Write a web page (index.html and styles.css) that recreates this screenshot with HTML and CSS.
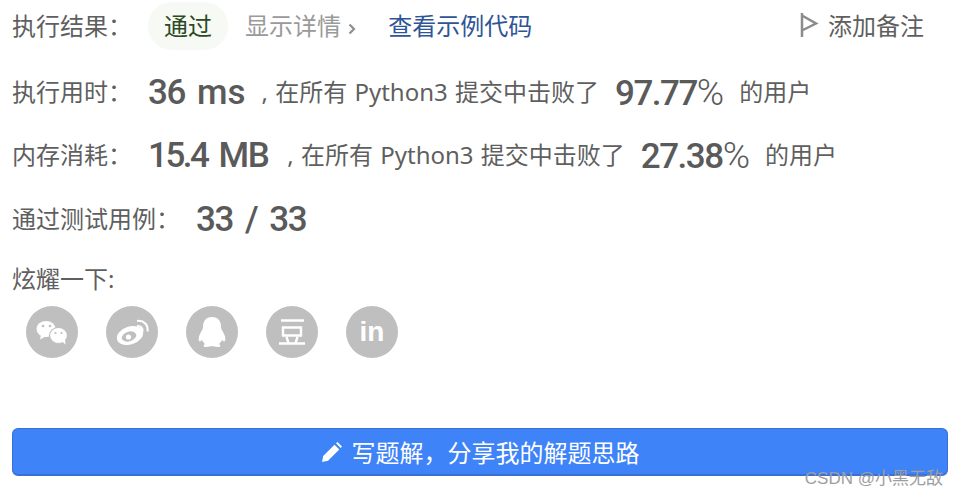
FILE: index.html
```html
<!DOCTYPE html>
<html lang="zh-CN">
<head>
    <meta charset="UTF-8">
    <meta name="viewport" content="width=device-width, initial-scale=1.0">
    <title>提交结果</title>
    <link rel="stylesheet" href="styles.css">
</head>
<body>
    <div class="result">
        <div class="row row-status">
            <span class="label">执行结果：</span>
            <span class="pill">通过</span>
            <span class="details">显示详情
                <svg class="chevron" width="8" height="12" viewBox="0 0 8 12"><path d="M1.500 1.500 6 6l-4.500 4.500" fill="none" stroke="#8f8f8f" stroke-width="2.200"/></svg>
            </span>
            <span class="sample">查看示例代码</span>
            <span class="note">
                <svg class="flag" width="19" height="24" viewBox="0 0 19 24"><path d="M2 0v24M2 2.500l14 8-14 7" fill="none" stroke="#8c8c8c" stroke-width="2.500"/></svg>
                添加备注
            </span>
        </div>

        <div class="row row-time">
            <span class="label">执行用时：</span>
            <span class="big big-time">36 <b class="unit">ms</b></span>
            <span class="text">, 在所有 Python3 提交中击败了</span>
            <span class="big big-percent">97.77<b class="percent">%</b></span>
            <span class="text">的用户</span>
        </div>

        <div class="row row-memory">
            <span class="label">内存消耗：</span>
            <span class="big big-time big-memory">15.4 <b class="unit">MB</b></span>
            <span class="text">, 在所有 Python3 提交中击败了</span>
            <span class="big big-percent">27.38<b class="percent">%</b></span>
            <span class="text">的用户</span>
        </div>

        <div class="row row-cases">
            <span class="label label-cases">通过测试用例：</span>
            <span class="big">33 / 33</span>
        </div>

        <div class="share-title">炫耀一下:</div>
        <div class="share">
            <a class="circle">
                <svg width="52" height="52" viewBox="0 0 52 52" fill="#fff">
                    <ellipse cx="20" cy="23" rx="9.500" ry="8"/>
                    <path d="M15 29l-1 4.500 5.500-3z"/>
                    <ellipse cx="32.500" cy="29.500" rx="9" ry="8" stroke="#bfbfbf" stroke-width="1.200"/>
                    <path d="M36 35.500l3.500 3-.5-5z"/>
                    <g fill="#bfbfbf">
                        <circle cx="17" cy="20" r="1.300"/>
                        <circle cx="24" cy="20" r="1.300"/>
                        <circle cx="29.500" cy="27" r="1.100"/>
                        <circle cx="35.500" cy="27" r="1.100"/>
                    </g>
                </svg>
            </a>
            <a class="circle">
                <svg width="52" height="52" viewBox="0 0 52 52" fill="#fff">
                    <ellipse cx="24" cy="29.500" rx="13.500" ry="9" transform="rotate(-18 24 29.500)"/>
                    <ellipse cx="23" cy="30.500" rx="7.500" ry="4.800" transform="rotate(-18 23 30.500)" fill="#bfbfbf"/>
                    <circle cx="22.500" cy="31" r="2.600"/>
                    <path d="M31 20c3.500-.5 6 2 5.500 5.500M31 15c7-1 11.500 4 10.500 10.500" fill="none" stroke="#fff" stroke-width="2"/>
                </svg>
            </a>
            <a class="circle">
                <svg width="52" height="52" viewBox="0 0 52 52" fill="#fff">
                    <path d="M26 11c-6 0-9 4-9 10 0 2-1 3-2 5-2 3-3 7-2 9 1 1 2 0 3-1 1 2 2 3 3 4-2 1-2 3 1 3 3 0 5-1 6-1s3 1 6 1c3 0 3-2 1-3 1-1 2-2 3-4 1 1 2 2 3 1 1-2 0-6-2-9-1-2-2-3-2-5 0-6-3-10-9-10z"/>
                </svg>
            </a>
            <a class="circle">
                <svg width="52" height="52" viewBox="0 0 52 52" fill="none" stroke="#fff" stroke-width="2.400">
                    <path d="M15 14.500h23M17 21.500h18v8H17zM20.500 31l2 6M31.500 31l-2 6M13 37.500h26"/>
                </svg>
            </a>
            <a class="circle circle-in">in</a>
        </div>

        <button class="write">
            <svg width="22" height="22" viewBox="0 0 22 22" fill="#fff"><path d="M1 21l1.200-6L13.500 3.700l4.800 4.800L7 19.800zM15 2.200l1.500-1.200 4.500 4.500-1.300 1.500z"/></svg>
            写题解，分享我的解题思路
        </button>
    </div>
    <span class="mark">CSDN @小黑无敌</span>
</body>
</html>
```

FILE: styles.css
```css
* {
    box-sizing: border-box;
}
body {
    margin: 0;
    background: #fff;
    color: #5f5f5f;
    font-family: "Noto Sans", "Noto Sans CJK SC", sans-serif;
    font-size: 24px;
}
.result {
    padding: 2px 10px 0 12px;
}
.row {
    display: flex;
    align-items: center;
    white-space: nowrap;
    height: 48px;
}
.label {
    width: 136px;
    margin-bottom: 3px;
}
.label-cases {
    width: 184px;
}
.pill {
    width: 80px;
    height: 48px;
    line-height: 48px;
    text-align: center;
    border-radius: 24px;
    background: #f6f9f4;
    color: #2c4a1f;
}
.details {
    margin: 0 0 3px 17px;
    color: #9a9a9a;
}
.chevron {
    margin-left: 1px;
}
.sample {
    margin: 0 0 3px 32px;
    color: #2f5596;
}
.note {
    margin: 0 24px 3px auto;
    display: flex;
    align-items: center;
    gap: 9px;
}
.row-time {
    margin-top: 18px;
}
.row-memory {
    margin-top: 15px;
}
.row-cases {
    margin-top: 16px;
}
.text {
    margin-bottom: 3px;
    word-spacing: 1px;
}
.big {
    font-family: Roboto, "Liberation Sans", sans-serif;
    font-size: 35px;
    font-weight: 500;
    color: #5a5a5a;
    letter-spacing: -1.500px;
    word-spacing: 5px;
}
.unit {
    font-weight: 500;
    letter-spacing: 0;
}
.percent {
    font-size: 37px;
    font-weight: 300;
    letter-spacing: 0;
}
.big-time {
    margin-right: 16px;
}
.big-memory {
    margin-right: 19px;
    letter-spacing: -2.500px;
}
.big-memory .unit {
    letter-spacing: -1.500px;
}
.big-percent {
    margin: 0 15px 0 16px;
}
.share-title {
    margin-top: 23px;
    height: 26px;
    line-height: 26px;
}
.share {
    display: flex;
    gap: 28px;
    margin: 14px 0 0 14px;
}
.circle {
    width: 52px;
    height: 52px;
    border-radius: 50%;
    background: #bfbfbf;
    display: flex;
    align-items: center;
    justify-content: center;
}
.circle-in {
    color: #fff;
    font-family: "Liberation Sans", sans-serif;
    font-weight: 700;
    font-size: 28px;
}
.write {
    display: flex;
    align-items: center;
    justify-content: center;
    gap: 9px;
    width: 936px;
    height: 48px;
    margin-top: 70px;
    padding: 0;
    border: 1px solid #3a70d4;
    border-bottom-width: 2px;
    border-radius: 6px;
    background: #3e83f8;
    color: #fff;
    font-family: inherit;
    font-size: 24px;
}
.mark {
    position: absolute;
    right: 15px;
    top: 464px;
    color: #9e9e9e;
    font-family: "Liberation Sans", "Noto Sans CJK SC", sans-serif;
    font-size: 17px;
}
```
